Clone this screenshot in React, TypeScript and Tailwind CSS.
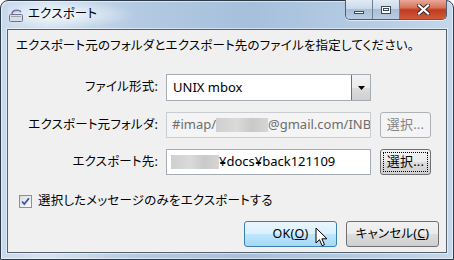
import React from 'react';

const font = "font-['Noto_Sans','Noto_Sans_CJK_JP',sans-serif] [font-feature-settings:'palt']";

function WindowIcon() {
  return (
    <svg width="16" height="16" viewBox="0 0 16 16">
      <rect x="1.5" y="7.5" width="13" height="7" rx="1" fill="#d9dde6" stroke="#6c7386" />
      <path d="M3 9.5h10" stroke="#9aa1b3" />
      <path d="M4 7c0-4 7-5 9-2" fill="none" stroke="#7b72b8" strokeWidth="1.6" />
      <path d="M5 6.5c1-2 5-2.5 7-1" fill="none" stroke="#c7c2ea" strokeWidth="1" />
    </svg>
  );
}

function CaptionButtons() {
  return (
    <div className="flex h-[20px] -mt-px border border-t-0 border-[#4f5e6e] rounded-b-[5px] overflow-hidden shadow-[0_1px_0_rgba(255,255,255,0.6)]">
      <div className="w-[27px] flex items-center justify-center border-r border-[#6e7f92] bg-[linear-gradient(#e1eaf4_0%,#cad9ea_45%,#a9bfd7_50%,#b9cde3_100%)]">
        <div className="w-[10px] h-[3px] mt-[6px] bg-white border border-[#404a57]" />
      </div>
      <div className="w-[27px] flex items-center justify-center border-r border-[#6e7f92] bg-[linear-gradient(#e1eaf4_0%,#cad9ea_45%,#a9bfd7_50%,#b9cde3_100%)]">
        <div className="w-[10px] h-[8px] border border-[#404a57] bg-white flex items-center justify-center">
          <div className="w-[6px] h-[3px] border border-[#404a57]" />
        </div>
      </div>
      <div className="w-[46px] flex items-center justify-center bg-[linear-gradient(#e9a898_0%,#d7735c_40%,#c23b20_52%,#cf5a3b_100%)]">
        <svg width="13" height="11" viewBox="0 0 13 11">
          <path d="M2 1.5l9 8M11 1.5l-9 8" stroke="#3a2a28" strokeWidth="4" strokeLinecap="square" />
          <path d="M2 1.5l9 8M11 1.5l-9 8" stroke="#ffffff" strokeWidth="2.2" strokeLinecap="square" />
        </svg>
      </div>
    </div>
  );
}

function Blur({ w }: { w: number }) {
  return (
    <span
      className="inline-block h-[14px] shrink-0 bg-[linear-gradient(90deg,#cfcfcf,#dadada_40%,#c9c9c9_70%,#d6d6d6)]"
      style={{ width: w }}
    />
  );
}

function SelectButton({ disabled, focused }: { disabled?: boolean; focused?: boolean }) {
  if (disabled) {
    return (
      <div className="w-[51px] h-[26px] rounded-[3px] border border-[#adb2b5] bg-[#f4f4f4] flex items-center justify-center text-[13px] text-[#838383]">
        選択...
      </div>
    );
  }
  return (
    <div className="w-[51px] h-[26px] rounded-[3px] border border-[#707070] bg-[linear-gradient(#f2f2f2_0%,#ebebeb_50%,#dddddd_51%,#cfcfcf_100%)] p-[2px]">
      <div className={`w-full h-full flex items-center justify-center text-[13px] text-black ${focused ? 'border border-dotted border-black' : ''}`}>
        選択...
      </div>
    </div>
  );
}

export default function App() {
  return (
    <div className={`w-[454px] h-[260px] ${font} text-[12.5px] tracking-[0.2px] relative`}>
      <div className="w-full h-full flex flex-col rounded-t-[8px] border border-[#2e3947] bg-[linear-gradient(90deg,#c7d9ec_0%,#d5e3f1_10%,#b3cae2_30%,#a6c0dc_55%,#b4cbe3_80%,#c4d7eb_100%)] shadow-[inset_0_0_0_1px_rgba(255,255,255,0.55)]">
        {/* title bar */}
        <div className="h-[28px] flex items-start justify-between pl-[7px] pr-[6px]">
          <div className="flex items-center gap-[4px] h-[27px] pr-[40px] bg-[radial-gradient(ellipse_at_40%_50%,rgba(255,255,255,0.75),rgba(255,255,255,0)_70%)]">
            <WindowIcon />
            <span className="text-black">エクスポート</span>
          </div>
          <CaptionButtons />
        </div>

        {/* client */}
        <div className="flex-1 mx-[6px] mb-[6px] border border-[#56606c] bg-[#f0f0f0] flex flex-col shadow-[0_0_0_1px_rgba(255,255,255,0.5)]">
          <div className="pl-[8px] pt-[7px] text-black leading-[18px] whitespace-nowrap">
            エクスポート元のフォルダとエクスポート先のファイルを指定してください。
          </div>

          <div className="mt-[19px] flex flex-col gap-[11px]">
            <div className="flex items-center">
              <div className="w-[158px] text-right text-black pr-[8px]">ファイル形式:</div>
              <div className="w-[205px] h-[27px] border border-[#a5acb5] bg-white flex items-center justify-between">
                <span className="pl-[6px] text-[13px] tracking-normal text-black">UNIX mbox</span>
                <div className="w-[19px] h-[25px] border-l border-[#707070] bg-[linear-gradient(#f2f2f2_0%,#ebebeb_50%,#dddddd_51%,#cfcfcf_100%)] flex items-center justify-center">
                  <svg width="7" height="4" viewBox="0 0 7 4">
                    <path d="M0 0h7L3.5 4z" fill="#000" />
                  </svg>
                </div>
              </div>
            </div>

            <div className="flex items-center">
              <div className="w-[158px] text-right text-black pr-[8px]">エクスポート元フォルダ:</div>
              <div className="w-[205px] h-[26px] border border-[#c9cdd2] bg-[#f4f4f4] flex items-center overflow-hidden whitespace-nowrap text-[13px] tracking-normal">
                <span className="pl-[5px] text-[#6d6d6d]">#imap/</span>
                <Blur w={52} />
                <span className="text-[#6d6d6d]">@gmail.com/INBOX</span>
              </div>
              <div className="ml-[9px]">
                <SelectButton disabled />
              </div>
            </div>

            <div className="flex items-center">
              <div className="w-[158px] text-right text-black pr-[8px]">エクスポート先:</div>
              <div className="w-[205px] h-[26px] border border-[#a5acb5] bg-white flex items-center overflow-hidden whitespace-nowrap text-[13px] tracking-normal">
                <span className="pl-[4px]" />
                <Blur w={48} />
                <span className="text-black">¥docs¥back121109</span>
              </div>
              <div className="ml-[9px]">
                <SelectButton focused />
              </div>
            </div>
          </div>

          <div className="mt-[17px] pl-[11px] flex items-center gap-[6px]">
            <div className="w-[13px] h-[13px] border border-[#8e8f8f] bg-[linear-gradient(135deg,#dcdcdc,#fbfbfb)] p-[1px] flex items-center justify-center">
              <svg width="9" height="9" viewBox="0 0 9 9">
                <path d="M1 4.5l2.3 2.5L8 1.2" fill="none" stroke="#3b5aa3" strokeWidth="1.8" />
              </svg>
            </div>
            <span className="text-black">選択したメッセージのみをエクスポートする</span>
          </div>

          <div className="mt-auto mb-[5px] flex justify-end gap-[9px] pr-[7px]">
            <div className="relative w-[93px] h-[26px] rounded-[3px] border border-[#3c7fb1] bg-[linear-gradient(#eaf6fd_0%,#d9f0fc_50%,#bee6fd_51%,#a7d9f5_100%)] flex items-center justify-center text-black">
              OK(<span className="underline">O</span>)
              <svg className="absolute left-[70px] top-[5px]" width="14" height="21" viewBox="0 0 14 21">
                <path d="M1 1v15l3.5-3.3 2.6 6 2.4-1-2.6-5.9H12z" fill="#fff" stroke="#000" strokeWidth="1" strokeLinejoin="miter" />
              </svg>
            </div>
            <div className="w-[93px] h-[26px] rounded-[3px] border border-[#707070] bg-[linear-gradient(#f2f2f2_0%,#ebebeb_50%,#dddddd_51%,#cfcfcf_100%)] flex items-center justify-center text-black">
              キャンセル(<span className="underline">C</span>)
            </div>
          </div>
        </div>
      </div>
    </div>
  );
}
